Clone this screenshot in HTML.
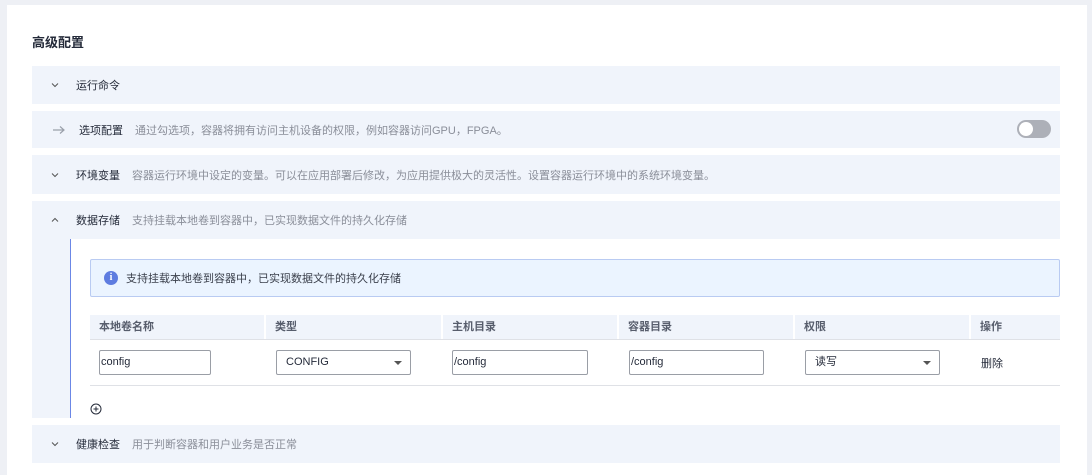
<!DOCTYPE html>
<html><head><meta charset="utf-8"><style>
*{box-sizing:border-box;margin:0;padding:0}
body{width:1092px;height:467px;background:#eef0f5;font-family:"Liberation Sans","Noto Sans CJK SC",sans-serif;font-size:11px;color:#252b3a;position:relative;overflow:hidden}
.card{position:absolute;left:7px;top:5px;width:1080px;height:470px;background:#fff}
.abs{position:absolute}
.title{left:32px;top:32px;font-size:13px;font-weight:bold}
.row{position:absolute;left:32px;width:1028px;background:#f0f4fb}
.row .ch{position:absolute;left:18px;top:50%;margin-top:-5px}
.row .t{position:absolute;left:44px;top:50%;transform:translateY(-50%);white-space:nowrap}
.row .d{color:#8a8e99;margin-left:12px}
.inp{position:absolute;top:350px;height:25px;border:1px solid #9a9ea6;border-radius:2px;background:#fff;font-size:11px;line-height:23px;padding-left:1px}
.sel{padding-left:9px}
.sel:after{content:"";position:absolute;right:8px;top:10px;border-left:4px solid transparent;border-right:4px solid transparent;border-top:4px solid #555}
.hd{position:absolute;top:315px;height:24px;background:#f0f4fb;font-weight:bold;color:#575d6c;line-height:24px;padding-left:9px}
</style></head><body>
<div class="card"></div>
<div class="abs title">高级配置</div>
<div class="row" style="top:66px;height:38px"><svg class="ch" width="10" height="10"><path d="M2 3.5l3 3 3-3" stroke="#555" fill="none" stroke-width="1"/></svg><span class="t">运行命令</span></div>
<div class="row" style="top:111px;height:37px"><svg class="ch" width="14" height="10" style="left:20px"><path d="M1 5h11M8 1.5l4 3.5-4 3.5" stroke="#9aa0aa" fill="none" stroke-width="1.2"/></svg><span class="t" style="left:47px">选项配置<span class="d">通过勾选项，容器将拥有访问主机设备的权限，例如容器访问GPU，FPGA。</span></span>
<div class="abs" style="left:985px;top:9px;width:34px;height:18px;border-radius:9px;background:#adb0b8"><div class="abs" style="left:2px;top:2px;width:14px;height:14px;border-radius:7px;background:#fff"></div></div></div>
<div class="row" style="top:155px;height:39px"><svg class="ch" width="10" height="10"><path d="M2 3.5l3 3 3-3" stroke="#555" fill="none" stroke-width="1"/></svg><span class="t">环境变量<span class="d">容器运行环境中设定的变量。可以在应用部署后修改，为应用提供极大的灵活性。设置容器运行环境中的系统环境变量。</span></span></div>
<div class="row" style="top:201px;height:217px"><svg class="ch" width="10" height="10" style="top:19px;margin-top:-5px"><path d="M2 6.5l3-3 3 3" stroke="#555" fill="none" stroke-width="1"/></svg><span class="t" style="top:19px">数据存储<span class="d">支持挂载本地卷到容器中，已实现数据文件的持久化存储</span></span></div>
<div class="abs" style="left:70px;top:239px;width:990px;height:179px;background:#fff;border-left:1px solid #6b87e6"></div>
<div class="abs" style="left:90px;top:259px;width:970px;height:38px;background:#ebf4ff;border:1px solid #b9cbf2;border-radius:2px"></div>
<div class="abs" style="left:104px;top:271px;width:14px;height:14px;border-radius:7px;background:#5e7ce0;color:#fff;font-size:10px;font-weight:bold;text-align:center;line-height:14px;font-family:'Liberation Serif',serif">i</div>
<div class="abs" style="left:126px;top:270px;color:#3a3f4b">支持挂载本地卷到容器中，已实现数据文件的持久化存储</div>
<div class="hd" style="left:90px;width:174px">本地卷名称</div>
<div class="hd" style="left:266px;width:175px">类型</div>
<div class="hd" style="left:443px;width:174px">主机目录</div>
<div class="hd" style="left:619px;width:174px">容器目录</div>
<div class="hd" style="left:795px;width:174px">权限</div>
<div class="hd" style="left:971px;width:89px">操作</div>
<div class="abs" style="left:90px;top:339px;width:970px;height:1px;background:#dfe1e6"></div>
<div class="abs" style="left:90px;top:385px;width:970px;height:1px;background:#dfe1e6"></div>
<div class="inp" style="left:99px;width:112px">config</div>
<div class="inp sel" style="left:276px;width:135px">CONFIG</div>
<div class="inp" style="left:452px;width:136px">/config</div>
<div class="inp" style="left:629px;width:135px">/config</div>
<div class="inp sel" style="left:805px;width:135px">读写</div>
<div class="abs" style="left:981px;top:355px">删除</div>
<svg class="abs" style="left:90px;top:403px" width="12" height="12"><circle cx="6" cy="6" r="5" stroke="#252b3a" fill="none"/><path d="M3.5 6h5M6 3.5v5" stroke="#252b3a"/></svg>
<div class="row" style="top:425px;height:38px"><svg class="ch" width="10" height="10"><path d="M2 3.5l3 3 3-3" stroke="#555" fill="none" stroke-width="1"/></svg><span class="t">健康检查<span class="d">用于判断容器和用户业务是否正常</span></span></div>
</body></html>
